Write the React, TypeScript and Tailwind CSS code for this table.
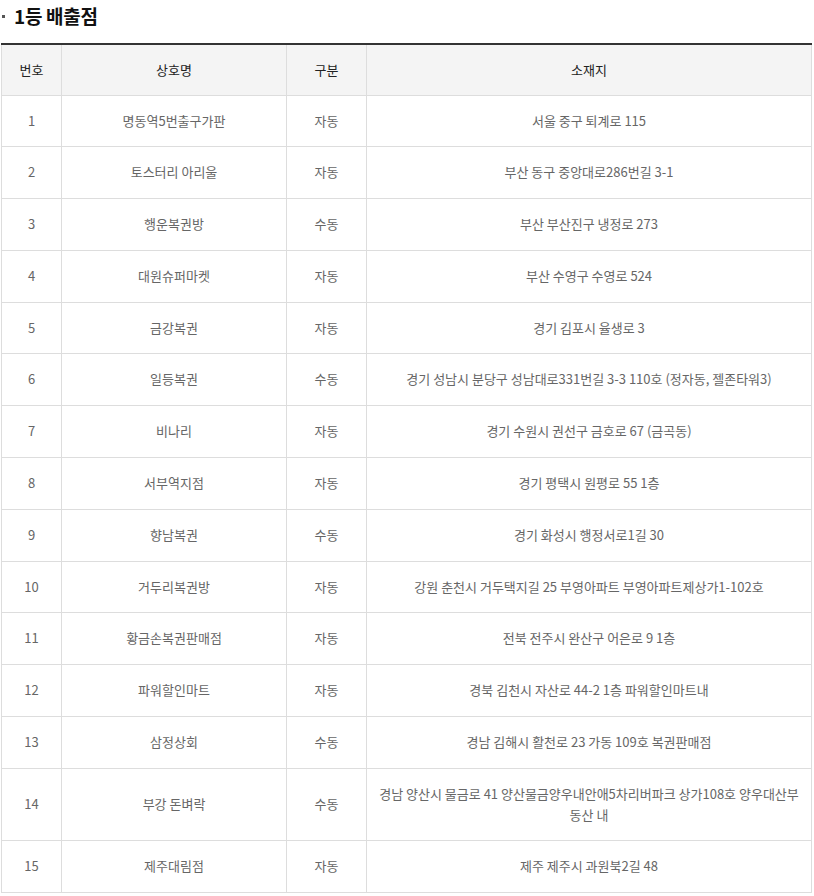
import React from "react";

const rows: [string, string, string, string][] = [
  ["1", "명동역5번출구가판", "자동", "서울 중구 퇴계로 115"],
  ["2", "토스터리 아리울", "자동", "부산 동구 중앙대로286번길 3-1"],
  ["3", "행운복권방", "수동", "부산 부산진구 냉정로 273"],
  ["4", "대원슈퍼마켓", "자동", "부산 수영구 수영로 524"],
  ["5", "금강복권", "자동", "경기 김포시 율생로 3"],
  ["6", "일등복권", "수동", "경기 성남시 분당구 성남대로331번길 3-3 110호 (정자동, 젤존타워3)"],
  ["7", "비나리", "자동", "경기 수원시 권선구 금호로 67 (금곡동)"],
  ["8", "서부역지점", "자동", "경기 평택시 원평로 55 1층"],
  ["9", "향남복권", "수동", "경기 화성시 행정서로1길 30"],
  ["10", "거두리복권방", "자동", "강원 춘천시 거두택지길 25 부영아파트 부영아파트제상가1-102호"],
  ["11", "황금손복권판매점", "자동", "전북 전주시 완산구 어은로 9 1층"],
  ["12", "파워할인마트", "자동", "경북 김천시 자산로 44-2 1층 파워할인마트내"],
  ["13", "삼정상회", "수동", "경남 김해시 활천로 23 가동 109호 복권판매점"],
  ["14", "부강 돈벼락", "수동", "경남 양산시 물금로 41 양산물금양우내안애5차리버파크 상가108호 양우대산부동산 내"],
  ["15", "제주대림점", "자동", "제주 제주시 과원북2길 48"],
];

export default function App() {
  return (
    <div
      className="w-[814px] bg-white"
      style={{ fontFamily: '"Noto Sans CJK KR", "Noto Sans", sans-serif' }}
    >
      <h2 className="flex items-center h-[43px] pb-[10px] text-[19px] font-bold text-[#111] tracking-[-0.3px]">
        <span className="ml-[2px] mr-[9px] inline-block w-[3px] h-[3px] bg-[#555]"></span>
        1등 배출점
      </h2>
      <table className="ml-[1px] w-[811px] table-fixed border-collapse border-t-2 border-t-[#333] text-[13px]">
        <colgroup>
          <col className="w-[60px]" />
          <col className="w-[225px]" />
          <col className="w-[80px]" />
          <col />
        </colgroup>
        <thead>
          <tr className="bg-[#f4f4f4] h-[51px]">
            {["번호", "상호명", "구분", "소재지"].map((h) => (
              <th
                key={h}
                className="border border-[#dddddd] border-t-0 font-normal text-[#222] text-center px-2"
              >
                {h}
              </th>
            ))}
          </tr>
        </thead>
        <tbody>
          {rows.map((r) => (
            <tr key={r[0]}>
              {r.map((c, i) => (
                <td
                  key={i}
                  className="border border-[#dddddd] text-[#666] text-center align-middle py-[15px] px-[8px] leading-[1.6]"
                >
                  {c}
                </td>
              ))}
            </tr>
          ))}
        </tbody>
      </table>
    </div>
  );
}
